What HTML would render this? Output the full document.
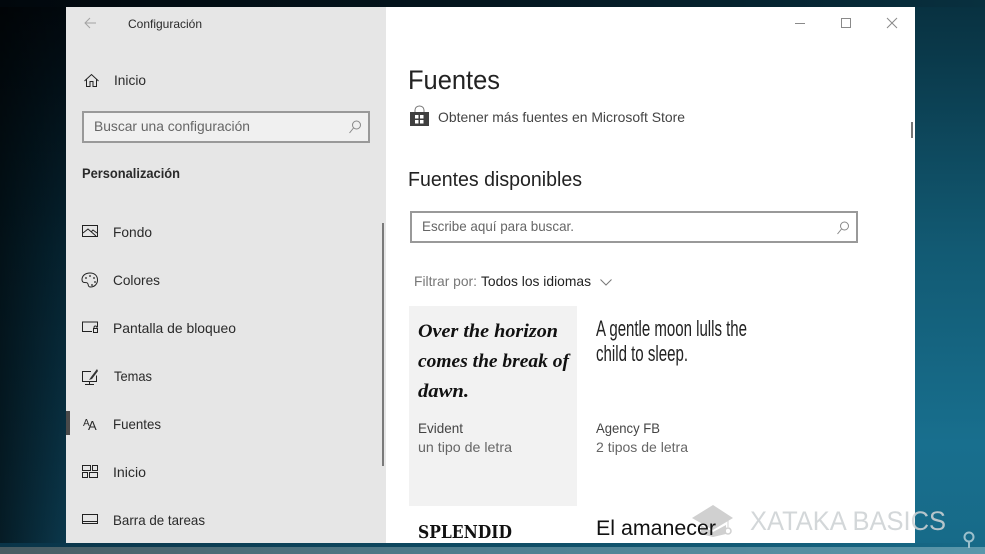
<!DOCTYPE html>
<html lang="es"><head><meta charset="utf-8"><title>Fuentes</title>
<style>
html,body{margin:0;padding:0;width:985px;height:554px;overflow:hidden;background:#000}
svg{display:block}
text{font-family:"Liberation Sans",sans-serif;font-size:14px;fill:#2a2a2a}
.ic{fill:none;stroke:#222;stroke-width:1}
.gr{fill:none;stroke:#888;stroke-width:1}
</style></head><body>
<svg width="985" height="554" viewBox="0 0 985 554" xmlns="http://www.w3.org/2000/svg">
<defs>
<linearGradient id="l" x1="0" y1="0" x2="0" y2="1"><stop offset="0" stop-color="#01070c"/><stop offset=".45" stop-color="#05222f"/><stop offset="1" stop-color="#0b384c"/></linearGradient>
<linearGradient id="lh" x1="0" y1="0" x2="1" y2="0"><stop offset="0" stop-color="#000" stop-opacity=".5"/><stop offset="1" stop-color="#000" stop-opacity="0"/></linearGradient>
<linearGradient id="r" x1="0" y1="0" x2="0" y2="1"><stop offset="0" stop-color="#08303f"/><stop offset=".45" stop-color="#125a73"/><stop offset=".8" stop-color="#186f8e"/><stop offset="1" stop-color="#176a88"/></linearGradient>
<linearGradient id="t" x1="0" y1="0" x2="1" y2="0"><stop offset="0" stop-color="#01070c"/><stop offset=".5" stop-color="#04161f"/><stop offset="1" stop-color="#08303f"/></linearGradient>
<linearGradient id="b" x1="0" y1="0" x2="1" y2="0"><stop offset="0" stop-color="#0a3448"/><stop offset=".5" stop-color="#0f4c64"/><stop offset="1" stop-color="#176a88"/></linearGradient>
<linearGradient id="s" x1="0" y1="0" x2="1" y2="0"><stop offset="0" stop-color="#4a5c62"/><stop offset=".5" stop-color="#4f7f90"/><stop offset="1" stop-color="#5a97ab"/></linearGradient>
</defs>

<!-- wallpaper -->
<rect width="66" height="554" fill="url(#l)"/>
<rect width="66" height="554" fill="url(#lh)"/>
<rect x="915" width="70" height="554" fill="url(#r)"/>
<rect width="985" height="7" fill="url(#t)"/>
<rect y="543" width="985" height="11" fill="url(#b)"/>
<rect y="547" width="985" height="7" fill="url(#s)"/>

<!-- window -->
<rect x="66" y="7" width="320" height="536" fill="#e6e6e6"/>
<rect x="386" y="7" width="529" height="536" fill="#fff"/>

<!-- sidebar header -->
<path d="M96 23H85M90 18l-5 5 5 5" fill="none" stroke="#a3a3a3" stroke-width="1"/>
<text x="128" y="28" style="font-size:12px" textLength="74" lengthAdjust="spacingAndGlyphs">Configuración</text>

<path class="ic" d="M84.500 81l7-6.500 7 6.500M86.500 79.500v7h3.500v-5h3v5h3.500v-7"/>
<text x="114" y="85" textLength="32" lengthAdjust="spacingAndGlyphs">Inicio</text>

<rect x="83" y="112" width="286" height="30" fill="#f0f0f0" stroke="#999" stroke-width="2"/>
<text x="94" y="131" style="fill:#666" textLength="156" lengthAdjust="spacingAndGlyphs">Buscar una configuración</text>
<circle cx="356.500" cy="125" r="4" class="gr"/><path class="gr" d="M353.500 128l-4 5"/>

<text x="82" y="178" style="font-weight:bold;font-size:13.500px" textLength="98" lengthAdjust="spacingAndGlyphs">Personalización</text>

<!-- nav -->
<rect x="82.500" y="225.500" width="15" height="11" class="ic"/>
<path class="ic" d="M83 233l5-4 8 7M91 232l2-2 4 3"/>
<text x="113" y="237" textLength="39" lengthAdjust="spacingAndGlyphs">Fondo</text>

<path class="ic" d="M90 273c-5 0-8 3-8 6.500 0 2 1 3 2.500 3 2 0 3 0 3.500 1.500s0 3 2.500 3c4 0 7-3 7-7 0-4.500-3-7-7.500-7z"/>
<circle cx="86" cy="278" r=".9" fill="#222"/><circle cx="90" cy="276" r=".9" fill="#222"/><circle cx="94" cy="278" r=".9" fill="#222"/><circle cx="95" cy="282" r=".9" fill="#222"/><circle cx="92" cy="285" r=".9" fill="#222"/>
<text x="113" y="285" textLength="47" lengthAdjust="spacingAndGlyphs">Colores</text>

<path class="ic" d="M92 331.500H82.500v-9.500h15v5"/>
<rect x="93.500" y="328.500" width="4" height="4" fill="none" stroke="#222" stroke-width="1"/>
<path class="ic" d="M94 328.500v-1a1.500 1.500 0 0 1 3 0v1"/>
<text x="113" y="333" textLength="123" lengthAdjust="spacingAndGlyphs">Pantalla de bloqueo</text>

<path class="ic" d="M91 371.500h-8.500v10h14v-6M89.500 384.500v-3M85 384.500h9"/>
<path d="M97 369l-6 8-2 3 3-1 6-8z" fill="#333"/>
<text x="114" y="381" textLength="38" lengthAdjust="spacingAndGlyphs">Temas</text>

<rect x="66" y="411" width="4" height="24" fill="#4a4a4a"/>
<text x="83" y="426" style="font-size:10px">A</text>
<text x="88" y="430" style="font-size:13px">A</text>
<text x="113" y="429" textLength="48" lengthAdjust="spacingAndGlyphs">Fuentes</text>

<path class="ic" d="M82.500 465.500h8v5h-8zM92.500 465.500h5v5h-5zM82.500 472.500h5v5h-5zM89.500 472.500h8v5h-8z"/>
<text x="113" y="477" textLength="33" lengthAdjust="spacingAndGlyphs">Inicio</text>

<rect x="82.500" y="514.500" width="15" height="9" class="ic"/>
<path class="ic" d="M82.500 521.500h15"/>
<text x="113" y="525" textLength="92" lengthAdjust="spacingAndGlyphs">Barra de tareas</text>

<rect x="382" y="223" width="2" height="243" fill="#7a7a7a"/>

<!-- window controls -->
<path d="M795 23.500h10" stroke="#8a8a8a" fill="none"/>
<rect x="841.500" y="18.500" width="9" height="9" fill="none" stroke="#8a8a8a"/>
<path d="M887 18l10 10M897 18l-10 10" stroke="#8a8a8a" fill="none"/>
<rect x="911" y="122" width="2" height="16" fill="#777"/>

<!-- content -->
<text x="408" y="89" style="font-size:27px;fill:#222" textLength="92" lengthAdjust="spacingAndGlyphs">Fuentes</text>

<path d="M410 112h19v14h-19z" fill="#3f3f3f"/>
<path d="M415 112v-2a4.500 4 0 0 1 9 0v2" fill="none" stroke="#777" stroke-width="1"/>
<path d="M415 115h3.500v3.500H415zM420 115h3.500v3.500H420zM415 120h3.500v3.500H415zM420 120h3.500v3.500H420z" fill="#fff"/>
<text x="438" y="122" style="fill:#444" textLength="247" lengthAdjust="spacingAndGlyphs">Obtener más fuentes en Microsoft Store</text>

<text x="408" y="186" style="font-size:20px;fill:#222" textLength="174" lengthAdjust="spacingAndGlyphs">Fuentes disponibles</text>

<rect x="411" y="212" width="446" height="30" fill="#fff" stroke="#999" stroke-width="2"/>
<text x="422" y="231" style="fill:#666" textLength="152" lengthAdjust="spacingAndGlyphs">Escribe aquí para buscar.</text>
<circle cx="844.500" cy="226" r="4" class="gr"/><path class="gr" d="M841.500 229l-4 5"/>

<text x="414" y="286" style="fill:#777" textLength="63" lengthAdjust="spacingAndGlyphs">Filtrar por:</text>
<text x="481" y="286" style="fill:#222" textLength="110" lengthAdjust="spacingAndGlyphs">Todos los idiomas</text>
<path d="M600.500 279.500l5.500 5.500 5.500-5.500" fill="none" stroke="#777"/>

<!-- font cards -->
<rect x="409" y="306" width="168" height="200" fill="#f2f2f2"/>
<text x="418" y="337" style="font-family:'Liberation Serif',serif;font-style:italic;font-weight:bold;font-size:19px;fill:#111" textLength="140" lengthAdjust="spacingAndGlyphs">Over the horizon</text>
<text x="418" y="367" style="font-family:'Liberation Serif',serif;font-style:italic;font-weight:bold;font-size:19px;fill:#111" textLength="151" lengthAdjust="spacingAndGlyphs">comes the break of</text>
<text x="418" y="397" style="font-family:'Liberation Serif',serif;font-style:italic;font-weight:bold;font-size:19px;fill:#111" textLength="51" lengthAdjust="spacingAndGlyphs">dawn.</text>
<text x="418" y="433" style="fill:#444" textLength="45" lengthAdjust="spacingAndGlyphs">Evident</text>
<text x="418" y="452" style="fill:#666" textLength="94" lengthAdjust="spacingAndGlyphs">un tipo de letra</text>

<text x="596" y="336" style="font-size:22px;fill:#222" textLength="151" lengthAdjust="spacingAndGlyphs">A gentle moon lulls the</text>
<text x="596" y="361" style="font-size:22px;fill:#222" textLength="92" lengthAdjust="spacingAndGlyphs">child to sleep.</text>
<text x="596" y="433" style="fill:#444" textLength="64" lengthAdjust="spacingAndGlyphs">Agency FB</text>
<text x="596" y="452" style="fill:#666" textLength="92" lengthAdjust="spacingAndGlyphs">2 tipos de letra</text>

<text x="418" y="538" style="font-family:'DejaVu Serif',serif;font-weight:bold;font-size:18px;fill:#111" textLength="94" lengthAdjust="spacingAndGlyphs">SPLENDID</text>

<!-- watermark -->
<path d="M692 518l21-13 20 13-20 12z" fill="#d0d0d0"/>
<path d="M701 525v9l12 3 13-3v-9l-13 7z" fill="#d0d0d0"/>
<path d="M728 520v7" stroke="#d0d0d0" fill="none"/>
<circle cx="728" cy="531" r="3" fill="none" stroke="#d0d0d0" stroke-width="1.500"/>
<text x="750" y="530" style="font-size:27px;fill:#cdd2d4;fill-opacity:.88" textLength="196" lengthAdjust="spacingAndGlyphs">XATAKA BASICS</text>
<text x="596" y="535" style="font-size:21px;fill:#111" textLength="120" lengthAdjust="spacingAndGlyphs">El amanecer</text>
<circle cx="969" cy="537" r="4.500" fill="none" stroke="#9cc0cc" stroke-width="2"/>
<path d="M969 542v6" stroke="#9cc0cc" stroke-width="2" fill="none"/>
</svg>
</body></html>
